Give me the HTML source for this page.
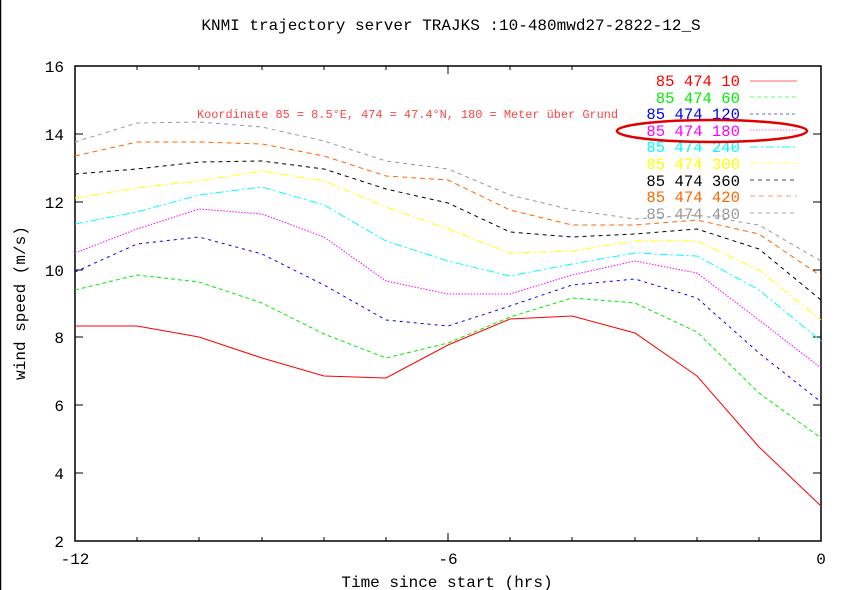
<!DOCTYPE html>
<html><head><meta charset="utf-8"><style>
html,body{margin:0;padding:0;background:#fff;}
svg{display:block;font-family:"Liberation Mono","DejaVu Sans Mono",monospace;}
</style></head><body>
<svg width="843" height="590" viewBox="0 0 843 590" xmlns="http://www.w3.org/2000/svg">
<rect width="843" height="590" fill="#fff"/>
<line x1="0.5" y1="0" x2="0.5" y2="590" stroke="#000" stroke-width="1.5"/>
<text x="451" y="30" font-size="16" text-anchor="middle" fill="#000">KNMI trajectory server TRAJKS :10-480mwd27-2822-12_S</text>
<rect x="75" y="66" width="746" height="475" fill="none" stroke="#000" stroke-width="1.5"/>
<g stroke="#000" stroke-width="1">
<line x1="75" y1="66" x2="83" y2="66"/><line x1="75" y1="134" x2="83" y2="134"/><line x1="75" y1="202" x2="83" y2="202"/><line x1="75" y1="270" x2="83" y2="270"/><line x1="75" y1="337" x2="83" y2="337"/><line x1="75" y1="405" x2="83" y2="405"/><line x1="75" y1="473" x2="83" y2="473"/>
<line x1="821" y1="134" x2="813" y2="134"/><line x1="821" y1="202" x2="813" y2="202"/><line x1="821" y1="270" x2="813" y2="270"/><line x1="821" y1="337" x2="813" y2="337"/><line x1="821" y1="405" x2="813" y2="405"/><line x1="821" y1="473" x2="813" y2="473"/>
<line x1="137" y1="541" x2="137" y2="537"/><line x1="199" y1="541" x2="199" y2="537"/><line x1="262" y1="541" x2="262" y2="537"/><line x1="324" y1="541" x2="324" y2="537"/><line x1="386" y1="541" x2="386" y2="537"/><line x1="448" y1="541" x2="448" y2="533"/><line x1="510" y1="541" x2="510" y2="537"/><line x1="572" y1="541" x2="572" y2="537"/><line x1="635" y1="541" x2="635" y2="537"/><line x1="697" y1="541" x2="697" y2="537"/><line x1="759" y1="541" x2="759" y2="537"/>
<line x1="137" y1="66" x2="137" y2="70"/><line x1="199" y1="66" x2="199" y2="70"/><line x1="262" y1="66" x2="262" y2="70"/><line x1="324" y1="66" x2="324" y2="70"/><line x1="386" y1="66" x2="386" y2="70"/><line x1="448" y1="66" x2="448" y2="74"/><line x1="510" y1="66" x2="510" y2="70"/><line x1="572" y1="66" x2="572" y2="70"/>
</g>
<g font-size="16" fill="#000" text-anchor="end">
<text x="64" y="72">16</text><text x="64" y="140">14</text><text x="64" y="208">12</text><text x="64" y="276">10</text><text x="64" y="343">8</text><text x="64" y="411">6</text><text x="64" y="479">4</text><text x="64" y="547">2</text>
</g>
<g font-size="16" fill="#000" text-anchor="middle">
<text x="75" y="564">-12</text><text x="448" y="564">-6</text><text x="821" y="564">0</text>
<text x="447" y="587">Time since start (hrs)</text>
</g>
<text transform="translate(25,303) rotate(-90)" font-size="16" text-anchor="middle" fill="#000">wind speed (m/s)</text>
<text x="197" y="118" font-size="11.9" fill="#ff4444">Koordinate 85 = 8.5°E, 474 = 47.4°N, 180 = Meter über Grund</text>
<g fill="none" stroke-width="1">
<polyline stroke="#ff0000" points="75,326 137,326 199,337 262,358 324,376 386,378 448,345 510,319 572,316 635,333 697,376 759,447 821,506"/>
<polyline stroke="#00ee00" stroke-dasharray="4,3" points="75,290 137,275 199,282 262,303 324,334 386,358 448,343 510,317 572,298 635,303 697,332 759,393 821,438"/>
<polyline stroke="#0000ff" stroke-dasharray="3,4" points="75,272 137,244 199,237 262,254 324,285 386,320 448,326 510,306 572,285 635,279 697,298 759,353 821,402"/>
<polyline stroke="#ff00ff" stroke-dasharray="1.5,1.5" points="75,253 137,229 199,209 262,214 324,237 386,281 448,294 510,294 572,275 635,261 697,273 759,320 821,368"/>
<polyline stroke="#00ffff" stroke-dasharray="8,3,2,3" points="75,224 137,212 199,195 262,187 324,205 386,241 448,261 510,276 572,264 635,253 697,256 759,290 821,341"/>
<polyline stroke="#ffff00" stroke-dasharray="8,3,2,3" points="75,198 137,188 199,181 262,171 324,181 386,207 448,229 510,253 572,251 635,241 697,241 759,270 821,320"/>
<polyline stroke="#000000" stroke-dasharray="4,4" points="75,174 137,169 199,162 262,161 324,169 386,189 448,203 510,232 572,237 635,234 697,229 759,249 821,300"/>
<polyline stroke="#ff6600" stroke-dasharray="5,4" points="75,156 137,142 199,142 262,144 324,156 386,176 448,180 510,210 572,225 635,225 697,220 759,234 821,276"/>
<polyline stroke="#999999" stroke-dasharray="4,4" points="75,142 137,123 199,122 262,127 324,141 386,161 448,169 510,195 572,210 635,219 697,215 759,225 821,261"/>
</g>
<g font-size="15.6" text-anchor="end">
<text x="740" y="86" fill="#ff0000">85 474 10</text>
<text x="740" y="103" fill="#00ee00">85 474 60</text>
<text x="740" y="119" fill="#0000ff">85 474 120</text>
<text x="740" y="136" fill="#ff00ff">85 474 180</text>
<text x="740" y="152" fill="#00ffff">85 474 240</text>
<text x="740" y="169" fill="#ffff00">85 474 300</text>
<text x="740" y="186" fill="#000000">85 474 360</text>
<text x="740" y="202" fill="#ff6600">85 474 420</text>
<text x="740" y="219" fill="#999999">85 474 480</text>
</g>
<g stroke-width="1">
<line x1="750" y1="81" x2="797" y2="81" stroke="#ff9999" stroke-width="1.5"/>
<line x1="750" y1="97" x2="797" y2="97" stroke="#66ff66" stroke-dasharray="4,3"/>
<line x1="750" y1="114" x2="797" y2="114" stroke="#6666ff" stroke-dasharray="3,3"/>
<line x1="750" y1="130" x2="797" y2="130" stroke="#ff66ff" stroke-dasharray="1.5,1.5"/>
<line x1="750" y1="147" x2="797" y2="147" stroke="#00ffff" stroke-dasharray="8,3,2,3"/>
<line x1="750" y1="163" x2="797" y2="163" stroke="#ffff66" stroke-dasharray="8,3,2,3"/>
<line x1="750" y1="180" x2="797" y2="180" stroke="#444" stroke-dasharray="4,4"/>
<line x1="750" y1="196" x2="797" y2="196" stroke="#ff9966" stroke-dasharray="5,4"/>
<line x1="750" y1="213" x2="797" y2="213" stroke="#aaa" stroke-dasharray="4,4"/>
</g>
<ellipse cx="712" cy="131" rx="95" ry="11" fill="none" stroke="#e00000" stroke-width="2.5"/>
</svg>
</body></html>
